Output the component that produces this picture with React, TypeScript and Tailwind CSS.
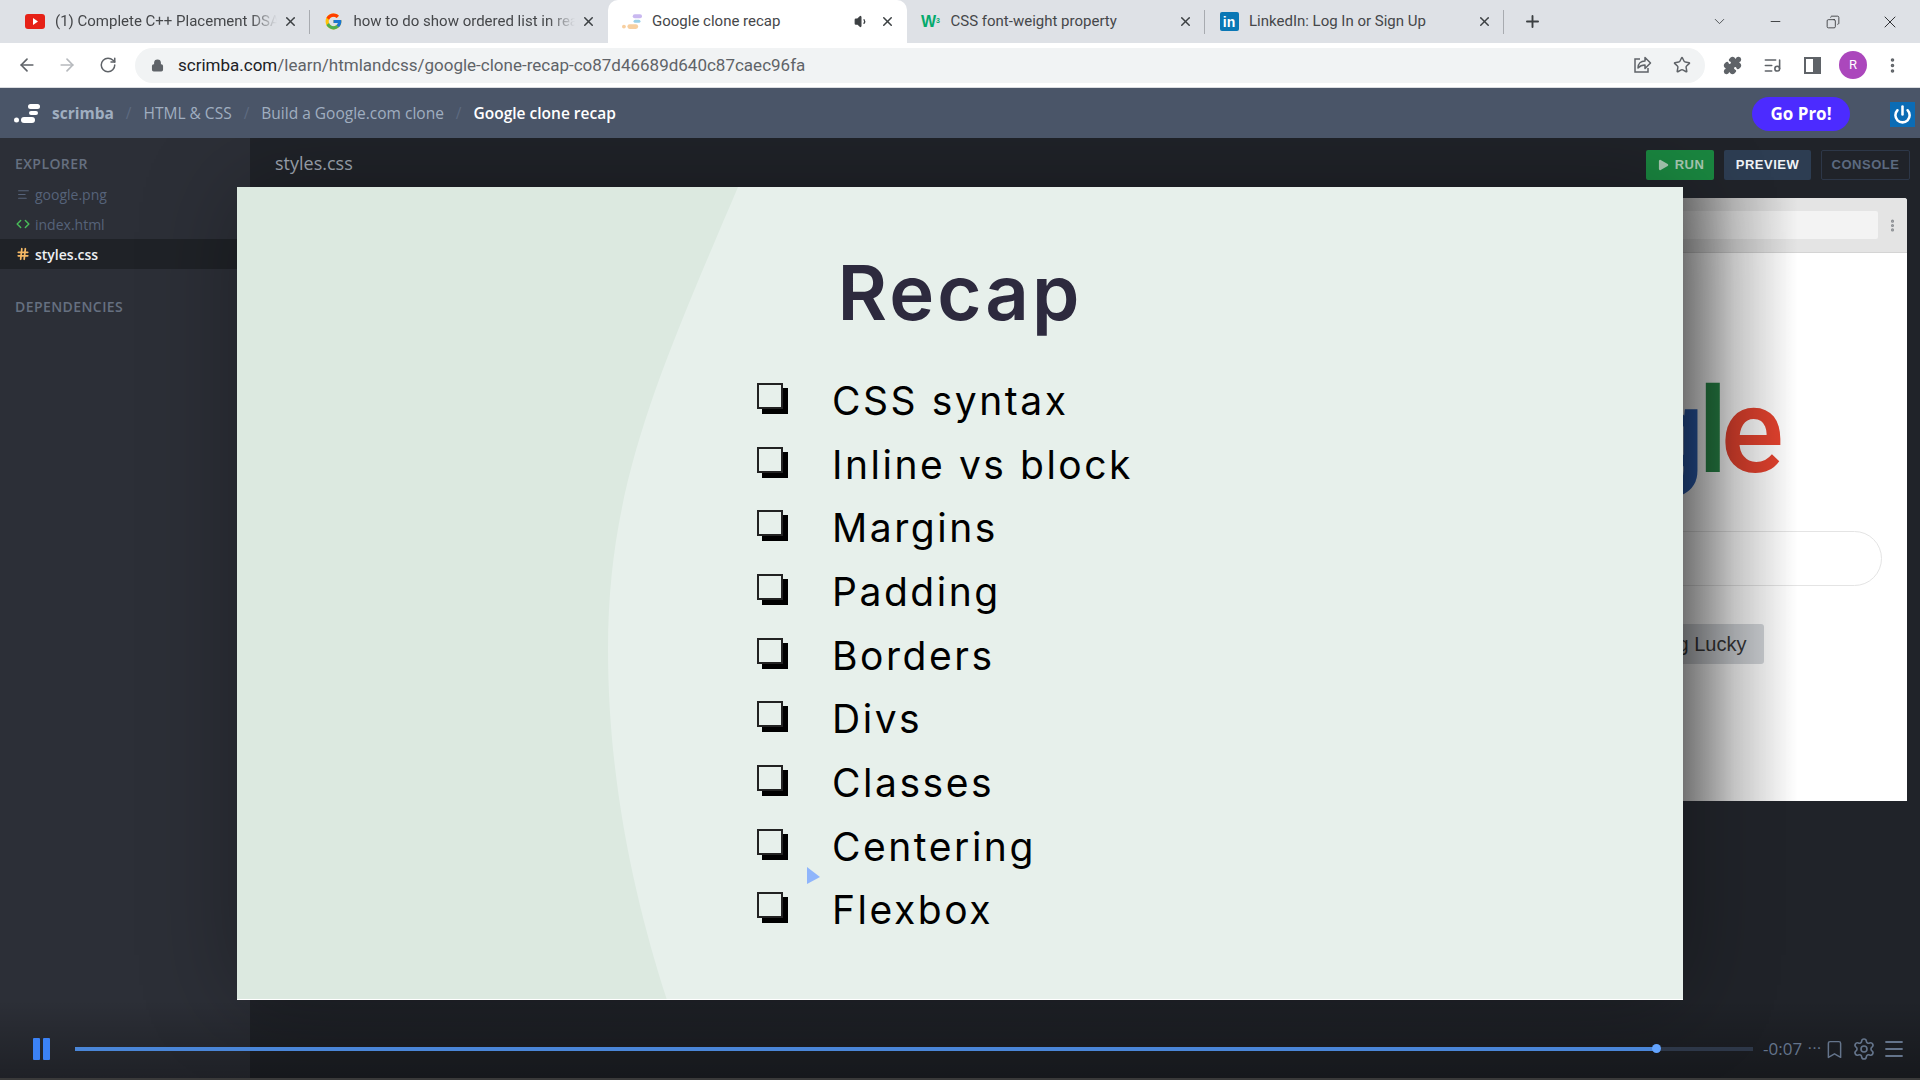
import React from "react";
import {
  ArrowLeft, ArrowRight, RotateCw, Lock, Star, Puzzle, ListMusic, MoreVertical, X, Plus, Minus,
  ChevronDown, Volume1, Play, Power, Bookmark, Settings, Menu, Code, Hash, AlignLeft, Copy,
} from "lucide-react";
import { FcGoogle } from "react-icons/fc";

const ScrimbaLogo = ({ faded = false }: { faded?: boolean }) => (
  <svg width="26" height="20" viewBox="0 0 26 20">
    <rect x="14" y="0" width="12" height="5" rx="2.5" fill={faded ? "#c9b8f0" : "#fff"} />
    <rect x="15" y="7" width="9" height="4" rx="2" fill={faded ? "#9ad0e8" : "#fff"} />
    <rect x="7" y="13" width="14" height="6" rx="3" fill={faded ? "#f7cfa0" : "#fff"} />
    <circle cx="2.5" cy="16" r="2.5" fill={faded ? "#f7cfa0" : "#fff"} />
  </svg>
);

const YouTube = () => (
  <svg width="20" height="15" viewBox="0 0 20 15">
    <rect width="20" height="15" rx="3" fill="#e62117" />
    <path d="M8 4l5 3.5L8 11z" fill="#fff" />
  </svg>
);

const ShareIcon = () => (
  <svg width="20" height="20" viewBox="0 0 20 20" fill="none" stroke="#5f6368" strokeWidth="1.5" className="ml-auto">
    <path d="M8 4H3v13h13v-4" />
    <path d="M6 13c0-4.5 3-7 7-7V2.5l5.5 5.5L13 13.5V10c-3 0-5 .8-7 3z" strokeLinejoin="round" />
  </svg>
);

function Tab({ icon, title, active, sound, sep, fade }: { icon: React.ReactNode; title: string; active?: boolean; sound?: boolean; sep?: boolean; fade?: boolean }) {
  return (
    <div className={`relative flex h-[43px] w-[298.5px] shrink-0 items-center pl-[14px] pr-[12px] ${active ? "rounded-t-[10px] bg-white" : ""}`}>
      <div className="flex w-[20px] shrink-0 items-center justify-center">{icon}</div>
      <span className={`ml-[10px] flex-1 overflow-hidden whitespace-nowrap text-[15px] text-[#45474a] ${fade ? "[mask-image:linear-gradient(to_right,black_88%,transparent)]" : ""}`}>{title}</span>
      {sound && <Volume1 size={15} className="mr-[5px] text-[#3c4043]" fill="#3c4043" />}
      <X size={15} strokeWidth={2.4} className="ml-[6px] shrink-0 text-[#3c4043]" />
      {sep && <div className="absolute right-0 top-[10px] h-[24px] w-px bg-[#a8abb0]" />}
    </div>
  );
}

const items = ["CSS syntax", "Inline vs block", "Margins", "Padding", "Borders", "Divs", "Classes", "Centering", "Flexbox"];

export default function App() {
  return (
    <div className="flex h-[1080px] w-[1920px] flex-col overflow-hidden bg-[#3a3a3a] font-['Roboto',sans-serif]">
      {/* Browser tab strip */}
      <div className="flex h-[43px] shrink-0 items-center bg-[#dee1e6] pl-[11px]">
        <Tab icon={<YouTube />} title="(1) Complete C++ Placement DSA" sep fade />
        <Tab icon={<FcGoogle size={19} />} title="how to do show ordered list in react" fade />
        <Tab icon={<ScrimbaLogo faded />} title="Google clone recap" active sound />
        <Tab icon={<span className="font-['Liberation_Sans',sans-serif] text-[16px] font-bold leading-none text-[#04aa6d]">W<sup className="text-[7px]">3</sup></span>} title="CSS font-weight property" sep />
        <Tab icon={<span className="flex h-[19px] w-[19px] items-center justify-center rounded-[2px] bg-[#0a77b5] font-['Liberation_Sans',sans-serif] text-[14px] font-bold leading-none text-white">in</span>} title="LinkedIn: Log In or Sign Up" sep />
        <Plus size={19} strokeWidth={2.4} className="ml-[19px] text-[#3c4043]" />
        <ChevronDown size={17} strokeWidth={1.2} className="ml-[169px] text-[#3c4043]" />
        <Minus size={15} strokeWidth={1.3} className="ml-[40px] text-[#202124]" />
        <Copy size={14} strokeWidth={1.3} className="ml-[43px] scale-x-[-1] text-[#202124]" />
        <X size={20} strokeWidth={1.1} className="ml-[40px] text-[#202124]" />
      </div>

      {/* Address bar */}
      <div className="flex h-[45px] shrink-0 items-center border-b border-[#dadce0] bg-white pl-[17px]">
        <ArrowLeft size={20} strokeWidth={2} className="text-[#5f6368]" />
        <ArrowRight size={20} strokeWidth={2} className="ml-[20px] text-[#b6b9bd]" />
        <RotateCw size={18} strokeWidth={2} className="ml-[22px] text-[#5f6368]" />
        <div className="ml-[18px] flex h-[35px] w-[1570px] items-center rounded-full bg-[#f1f3f4] pl-[16px]">
          <Lock size={13} strokeWidth={2.5} fill="#5f6368" className="text-[#5f6368]" />
          <span className="ml-[14px] mt-[2px] text-[17px] text-[#5f6368]">
            <span className="text-[#202124]">scrimba.com</span>/learn/htmlandcss/google-clone-recap-co87d46689d640c87caec96fa
          </span>
          <ShareIcon />
          <Star size={18} strokeWidth={2} className="ml-[21px] mr-[14px] text-[#5f6368]" />
        </div>
        <Puzzle size={19} fill="#5f6368" className="ml-[18px] text-[#5f6368]" />
        <ListMusic size={19} className="ml-[21px] text-[#5f6368]" />
        <div className="ml-[22px] flex h-[17px] w-[17px] justify-end border-2 border-[#5f6368]"><div className="h-full w-[6px] bg-[#5f6368]" /></div>
        <div className="ml-[18px] flex h-[28px] w-[28px] items-center justify-center rounded-full bg-[#ab47bc] text-[13px] text-white">R</div>
        <MoreVertical size={19} strokeWidth={2.5} className="ml-[16px] text-[#5f6368]" />
      </div>

      {/* Scrimba header */}
      <div className="flex h-[50px] shrink-0 items-center bg-[#4a5568] pl-[14px] pt-[2px] font-['Open_Sans',sans-serif] text-[15.5px]">
        <ScrimbaLogo />
        <span className="ml-[12px] font-bold text-[#a0aec0]">scrimba</span>
        <span className="mx-[12px] text-[#5d6a80]">/</span>
        <span className="text-[#a0aec0]">HTML &amp; CSS</span>
        <span className="mx-[12px] text-[#5d6a80]">/</span>
        <span className="text-[#a0aec0]">Build a Google.com clone</span>
        <span className="mx-[12px] text-[#5d6a80]">/</span>
        <span className="font-semibold text-white">Google clone recap</span>
        <div className="ml-auto flex h-[34px] w-[98px] items-center justify-center rounded-full bg-[#4c2bff] text-[17px] font-bold text-white">Go Pro!</div>
        <div className="ml-[40px] mr-[5px] flex h-[25px] w-[25px] items-center justify-center bg-[#0b6cb5]">
          <Power size={19} strokeWidth={3.2} className="text-white" />
        </div>
      </div>

      {/* Workspace */}
      <div className="relative flex h-[940px] shrink-0 overflow-hidden">
        <aside className="w-[250px] shrink-0 bg-[#2c2f37] font-['Open_Sans',sans-serif]">
          <div className="mt-[17px] pl-[15px] text-[14px] font-semibold leading-[18px] tracking-[0.03em] text-[#667080]">EXPLORER</div>
          <div className="mt-[6px]">
            <div className="flex h-[30px] items-center pl-[17px] text-[14px] text-[#56637a]">
              <AlignLeft size={13} className="text-[#56637a]" />
              <span className="ml-[5px]">google.png</span>
            </div>
            <div className="flex h-[30px] items-center pl-[16px] text-[14px] text-[#56637a]">
              <Code size={14} strokeWidth={2.5} className="text-[#48bb58]" />
              <span className="ml-[5px]">index.html</span>
            </div>
            <div className="flex h-[30px] items-center bg-[#1f2227] pl-[16px] text-[14px] font-semibold text-[#eef0f3]">
              <Hash size={14} strokeWidth={3} className="text-[#f6ba66]" />
              <span className="ml-[5px]">styles.css</span>
            </div>
          </div>
          <div className="mt-[29px] pl-[15px] text-[14px] font-semibold leading-[18px] tracking-[0.03em] text-[#667080]">DEPENDENCIES</div>
        </aside>

        <main className="flex flex-1 flex-col bg-[#202329]">
          <div className="flex h-[50px] shrink-0 items-center pl-[25px] pr-[10px]">
            <span className="font-['Open_Sans',sans-serif] text-[18px] text-[#a0a8b3]">styles.css</span>
            <div className="relative z-10 ml-auto mt-[3px] flex items-center gap-[10px] font-['Liberation_Sans',sans-serif] text-[13px] font-bold tracking-[0.04em]">
              <div className="flex h-[30px] w-[68px] items-center justify-center gap-[5px] rounded-[2px] bg-[#1a8740] text-[#a9c9b3]">
                <Play size={14} fill="#a9c9b3" strokeWidth={0} />RUN
              </div>
              <div className="flex h-[30px] w-[87px] items-center justify-center rounded-[2px] bg-[#2d3d52] text-[#f0f3f7]">PREVIEW</div>
              <div className="flex h-[30px] w-[89px] items-center justify-center rounded-[2px] border border-[#2d3748] text-[#5c6a80]">CONSOLE</div>
            </div>
          </div>
          <div className="flex justify-end pr-[13px] pt-[10px]">
            <div className="relative flex h-[603px] w-[700px] flex-col overflow-hidden rounded-t-[3px] bg-white">
              <div className="flex h-[55px] shrink-0 items-center border-b border-[#d4d4d4] bg-[#e4e4e4] pl-[10px]">
                <div className="h-[28px] w-[661px] rounded-[2px] bg-[#f3f3f3]" />
                <MoreVertical size={15} strokeWidth={3} className="ml-[7px] text-[#8b8e93]" />
              </div>
              <div className="h-[236px] shrink-0 pr-[123px] pt-[122px] text-right text-[118px] font-medium leading-[114px]">
                <span className="text-[#2f5a9e]">G</span>
                <span className="text-[#d9402f]">o</span>
                <span className="text-[#eab308]">o</span>
                <span className="tracking-[-7px] text-[#2f63b8]">g</span>
                <span className="tracking-[-7px] text-[#2a8a4a]">l</span>
                <span className="text-[#e5432f]">e</span>
              </div>
              <div className="ml-[25px] mt-[42px] h-[55px] w-[650px] shrink-0 rounded-full border border-[#e4e4e4]" />
              <div className="mt-[38px] flex justify-end pr-[143px] font-['Liberation_Sans',sans-serif] text-[20px] text-[#3a3a3a]">
                <div className="flex h-[40px] w-[190px] items-center justify-center whitespace-nowrap rounded-[3px] bg-[#d5d8dc]">I'm Feeling Lucky</div>
              </div>
              <div className="absolute left-[476px] top-0 h-full w-[115px] bg-linear-to-r from-black/47 via-black/20 via-45% to-transparent" />
            </div>
          </div>
        </main>

        {/* Slide overlay */}
        <div className="absolute left-[237px] top-[49px] z-20 h-[813px] w-[1446px] overflow-hidden border-b border-white bg-[#e7f0eb] shadow-[0_0_90px_rgba(0,0,0,0.3)] font-['Inter',sans-serif]">
          <svg className="absolute left-0 top-0" width="1446" height="813" viewBox="0 0 1446 813">
            <path d="M0 0H501C420 190 371 300 371 462C371 600 400 720 430 813H0Z" fill="#dce9e0" />
          </svg>
          <div className="relative">
            <h1 className="pt-[68px] text-center text-[76px] font-semibold leading-[75px] tracking-[0.04em] text-[#2d2a3e]">Recap</h1>
            <ul className="mt-[39px] pl-[520px]">
              {items.map((t) => (
                <li key={t} className="flex h-[63.67px] items-start gap-[49px] text-[39px] leading-[63px] tracking-[0.065em] text-black">
                  <span className="mt-[14px] h-[26px] w-[26px] shrink-0 border-2 border-[#222] shadow-[5px_5px_0_#000]" />
                  {t}
                </li>
              ))}
            </ul>
          </div>
          <svg className="absolute left-[570px] top-[680px]" width="13" height="17" viewBox="0 0 13 17">
            <path d="M0 0L13 10L0 17Z" fill="#8fb5fb" />
          </svg>
        </div>

        {/* Player controls */}
        <div className="absolute inset-x-0 bottom-0 z-30 flex h-[78px] flex-col justify-end bg-linear-to-b from-transparent to-black/30">
          <div className="flex h-[58px] items-center pl-[33px]">
            <div className="flex gap-[3px]">
              <div className="h-[22px] w-[7px] rounded-[1px] bg-[#3b82f6]" />
              <div className="h-[22px] w-[7px] rounded-[1px] bg-[#3b82f6]" />
            </div>
            <div className="relative ml-[25px] h-[4px] w-[1678px] bg-[#2d3748]">
              <div className="h-full w-[1581px] bg-[#4a86d8]" />
              <div className="absolute left-[1577px] top-[-3px] h-[9px] w-[9px] rounded-full bg-[#63a4ff]" />
            </div>
            <span className="ml-[10px] font-['Open_Sans',sans-serif] text-[17px] text-[#64748b]">-0:07</span>
            <span className="ml-[6px] text-[12px] font-bold leading-none tracking-[1px] text-[#64748b]">···</span>
            <Bookmark size={21} strokeWidth={1.7} className="ml-[2px] text-[#64748b]" />
            <Settings size={24} strokeWidth={1.6} className="ml-[7px] text-[#64748b]" />
            <Menu size={24} strokeWidth={1.8} className="ml-[6px] text-[#64748b]" />
          </div>
        </div>
      </div>
      <div className="h-[2px] shrink-0 bg-[#3a3a3a]" />
    </div>
  );
}
